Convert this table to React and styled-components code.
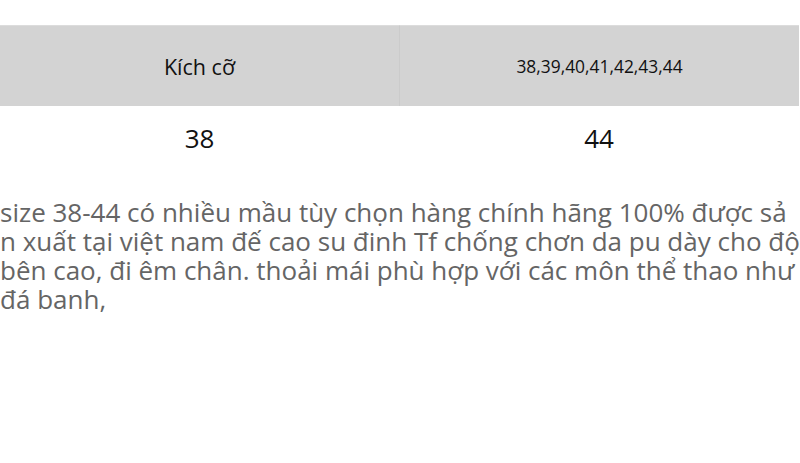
import React from 'react';
import styled, { createGlobalStyle } from 'styled-components';

const GlobalStyle = createGlobalStyle`
  body {
    margin: 0;
    background: #fff;
    font-family: "Open Sans", "Noto Sans", sans-serif;
    overflow: hidden;
  }
`;

const Page = styled.div`
  width: 800px;
  padding-top: 25px;
`;

const SizeTable = styled.div`
  display: grid;
  grid-template-columns: 399px 1fr;
  width: 799px;
`;

const HeadCell = styled.div`
  background: #d3d3d3;
  height: 81px;
  display: flex;
  align-items: center;
  justify-content: center;
  color: #111;
  font-size: ${(p) => p.$size}px;
  border-top: 1px solid #dcdcdc;
  box-sizing: border-box;
  border-left: ${(p) => (p.$split ? '1px solid #cbcbcb' : 'none')};
`;

const BodyCell = styled.div`
  height: 64px;
  display: flex;
  align-items: center;
  justify-content: center;
  color: #111;
  font-size: 26px;
`;

const Description = styled.p`
  margin: 28px 0 0;
  width: 800px;
  font-size: 26px;
  line-height: 29px;
  color: #656565;
  white-space: nowrap;
  overflow: hidden;
`;

export default function App() {
  return (
    <>
      <GlobalStyle />
      <Page>
        <SizeTable>
          <HeadCell $size={21.5}>Kích cỡ</HeadCell>
          <HeadCell $size={17.4} $split>38,39,40,41,42,43,44</HeadCell>
          <BodyCell>38</BodyCell>
          <BodyCell>44</BodyCell>
        </SizeTable>
        <Description>
          size 38-44 có nhiều mầu tùy chọn hàng chính hãng 100% được sả<br />
          n xuất tại việt nam đế cao su đinh Tf chống chơn da pu dày cho độ<br />
          bên cao, đi êm chân. thoải mái phù hợp với các môn thể thao như<br />
          đá banh,
        </Description>
      </Page>
    </>
  );
}
